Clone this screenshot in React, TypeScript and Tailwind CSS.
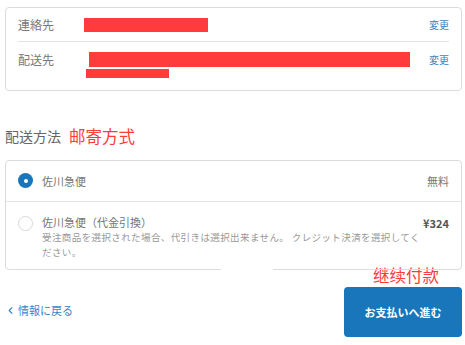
import { ChevronLeft } from 'lucide-react';

const font = { fontFamily: '"Noto Sans CJK JP", "Noto Sans", sans-serif' };

export default function App() {
  return (
    <div className="w-[465px] h-[345px] bg-white overflow-hidden" style={font}>
      {/* Contact / address card */}
      <div className="ml-[5px] mt-[7px] w-[457px] h-[84px] border border-[#dcdcdc] rounded-[4px] px-[12px]">
        <div className="flex items-center h-[34px] border-b border-[#e4e4e4]">
          <span className="w-[66px] text-[12px] text-[#777]">連絡先</span>
          <div className="w-[124px] h-[14px] bg-[#ff3b3b]" />
          <span className="ml-auto text-[10px] text-[#3a86c6]">変更</span>
        </div>
        <div className="flex items-start pt-[10px]">
          <span className="w-[66px] text-[12px] leading-[15px] text-[#777]">配送先</span>
          <div className="flex flex-col">
            <div className="ml-[5px] w-[321px] h-[15px] bg-[#ff3b3b]" />
            <div className="ml-[2px] mt-[2px] w-[83px] h-[9px] bg-[#ff3b3b]" />
          </div>
          <span className="ml-auto text-[10px] leading-[15px] text-[#3a86c6]">変更</span>
        </div>
      </div>

      {/* Section title */}
      <div className="ml-[5px] mt-[33px] flex items-center gap-[8px]">
        <span className="text-[14px] text-[#666]">配送方法</span>
        <span className="text-[16.5px] text-[#ff3b3b]">邮寄方式</span>
      </div>

      {/* Shipping options */}
      <div className="relative ml-[5px] mt-[11px] w-[457px] h-[110px] border border-[#dcdcdc] rounded-[4px]">
        <div className="flex items-center h-[41px] border-b border-[#e4e4e4] pl-[12px] pr-[12px]">
          <span className="w-[15px] h-[15px] rounded-full bg-[#1a76bb] flex items-center justify-center">
            <span className="w-[4px] h-[4px] rounded-full bg-white" />
          </span>
          <span className="ml-[9px] text-[11px] text-[#777]">佐川急便</span>
          <span className="ml-auto text-[11px] text-[#777]">無料</span>
        </div>
        <div className="flex items-start pt-[12px] pl-[12px] pr-[12px]">
          <span className="mt-[2px] w-[15px] h-[15px] rounded-full border border-[#d8d8d8] shrink-0" />
          <div className="ml-[9px] w-[380px]">
            <div className="text-[11px] leading-[16px] text-[#777]">佐川急便（代金引換）</div>
            <div className="text-[9.5px] leading-[15px] text-[#999] tracking-[0.4px]">
              受注商品を選択された場合、代引きは選択出来ません。 クレジット決済を選択してください。
            </div>
          </div>
          <span className="ml-auto text-[11px] leading-[18px] font-bold text-[#555]">¥324</span>
        </div>
        <div className="absolute left-[215px] bottom-[-3px] w-[52px] h-[5px] bg-white" />
      </div>

      {/* Footer */}
      <div className="ml-[5px] w-[457px] flex items-end justify-between mt-[-5px]">
        <a className="mb-[18px] flex items-center text-[11px] text-[#3a86c6]">
          <ChevronLeft size={11} strokeWidth={2.5} />
          <span className="ml-[2px]">情報に戻る</span>
        </a>
        <div className="flex flex-col items-end">
          <span className="mr-[23px] text-[16.5px] leading-[20px] text-[#ff3b3b]">继续付款</span>
          <button className="mt-[2px] w-[118px] h-[50px] rounded-[4px] bg-[#1a76bb] text-white text-[11px] font-bold">
            お支払いへ進む
          </button>
        </div>
      </div>
    </div>
  );
}
